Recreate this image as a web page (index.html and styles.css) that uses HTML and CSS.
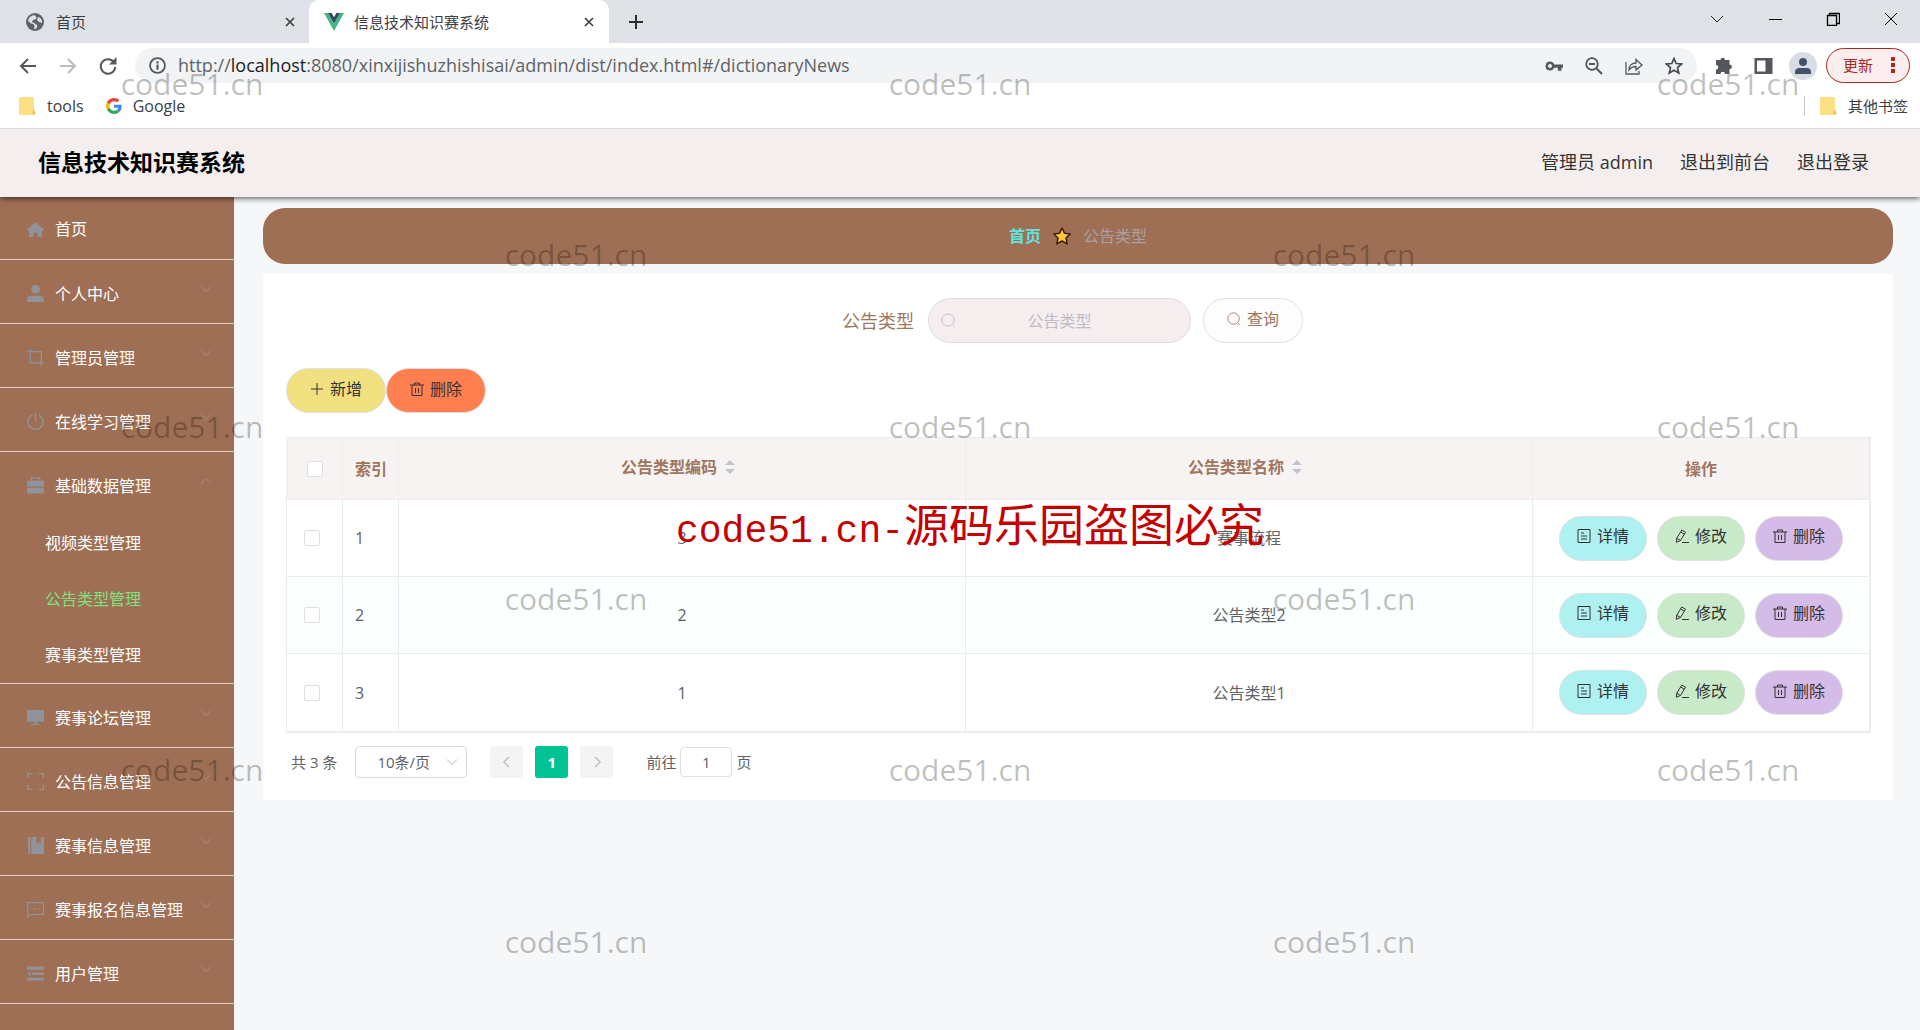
FILE: index.html
```html
<!DOCTYPE html>
<html lang="zh-CN">
<head>
<meta charset="utf-8">
<title>信息技术知识赛系统</title>
<link rel="stylesheet" href="styles.css">
</head>
<body>
<svg class="sprite" aria-hidden="true">
  <symbol id="i-close" viewBox="0 0 12 12"><path d="M2 2l8 8M10 2l-8 8" fill="none" stroke="currentColor" stroke-width="1.7"/></symbol>
  <symbol id="i-folder" viewBox="0 0 17 18"><path d="M1 0h12a2 2 0 0 1 2 2v10l2 4-2 2H1a1 1 0 0 1-1-1V1a1 1 0 0 1 1-1z" fill="#fbdf83"/><path d="M13 16.500c0-2 1-3 2-4l1.500 4-1.500 1.500z" fill="#f0ca58"/></symbol>
  <symbol id="i-down" viewBox="0 0 12 12"><path d="M1 3.500l5 5 5-5" fill="none" stroke="currentColor" stroke-width="1"/></symbol>
  <symbol id="i-search" viewBox="0 0 16 16"><circle cx="7.500" cy="7.500" r="6.500" fill="none" stroke="currentColor"/><path d="M12.300 12.300l2.500 2.700" stroke="currentColor"/></symbol>
  <symbol id="i-plus" viewBox="0 0 14 14"><path d="M7 1v12M1 7h12" stroke="currentColor"/></symbol>
  <symbol id="i-trash" viewBox="0 0 14 14"><path d="M0 3h14M4.500 3V1h5v2M2 3v10.500h10V3M5.500 6v5M8.500 6v5" fill="none" stroke="currentColor"/></symbol>
  <symbol id="i-doc" viewBox="0 0 14 14"><path d="M1 .5h12v13H1zM4 4h3M4 7h6M4 10h6" fill="none" stroke="currentColor"/></symbol>
  <symbol id="i-edit" viewBox="0 0 14 14"><path d="M6.800 1L10.500 3.200 5.500 11.500 1.300 13.300 1.700 9.300zM5.700 3l3.600 2.200M1.700 9.300l3.800 2.200M7 13.500h7" fill="none" stroke="currentColor"/></symbol>
  <symbol id="i-home" viewBox="0 0 16 16"><path d="M8 1l8 7v1h-2v6h-4v-4H6v4H2V9H0V8z" fill="currentColor"/></symbol>
  <symbol id="i-user" viewBox="0 0 16 16"><circle cx="8" cy="4" r="4" fill="currentColor"/><path d="M0 16v-2c0-3 2-4 4-4h8c2 0 4 1 4 4v2z" fill="currentColor"/></symbol>
  <symbol id="i-crop" viewBox="0 0 16 16"><path d="M3 0v13h13M0 2.500h13.500V16" fill="none" stroke="currentColor" stroke-width="1.200"/></symbol>
  <symbol id="i-power" viewBox="0 0 16 16"><path d="M8 0v8M5 1.700a7.200 7.200 0 1 0 6 0" fill="none" stroke="currentColor" stroke-width="1.200"/></symbol>
  <symbol id="i-case" viewBox="0 0 16 16"><path d="M4 4V.8h8V4" fill="none" stroke="currentColor" stroke-width="1.300"/><path d="M0 3.500h16V9H0zM0 10h16v5.500H0z" fill="currentColor"/></symbol>
  <symbol id="i-screen" viewBox="0 0 16 16"><path d="M0 1h16v11H0zM7 12h2v2h3v1H4v-1h3z" fill="currentColor"/></symbol>
  <symbol id="i-full" viewBox="0 0 16 16"><path d="M.6 5V.6H5M11 .6h4.400V5M15.400 11v4.400H11M5 15.400H.6V11" fill="none" stroke="currentColor" stroke-width="1.200"/></symbol>
  <symbol id="i-book" viewBox="0 0 16 16"><path d="M1 0h2v16H1zM4 0h5v7l2-2 2 2V0h3v16H4z" fill="currentColor"/></symbol>
  <symbol id="i-chat" viewBox="0 0 16 16"><path d="M.6 1.500h15v11H4L.6 15.300z" fill="none" stroke="currentColor" stroke-width="1.200"/><path d="M3.500 6.500H5V8H3.500zM7.200 6.500h1.500V8H7.200zM11 6.500h1.500V8H11z" fill="currentColor"/></symbol>
  <symbol id="i-list" viewBox="0 0 16 16"><path d="M0 1.500h16v3H0zM5 7h11v2.500H5zM0 12h16v2.500H0zM0 8.200L3.500 6v4.500z" fill="currentColor"/></symbol>
  <symbol id="i-star" viewBox="0 0 18 18"><path d="M9 1l2.500 5.300 5.700.7-4.200 4 1.100 5.900L9 14l-5.100 2.900L5 11 .8 7l5.700-.7z" fill="currentColor" stroke="#3a1c08" stroke-width="1.500" stroke-linejoin="round"/></symbol>
</svg>

<div class="browser">
  <div class="tabs">
    <div class="tab">
      <svg class="fav" viewBox="0 0 18 18"><circle cx="9" cy="9" r="9" fill="#5f6368"/><path d="M8 2c-3 .5-5.500 3-6 6l3 2.500 2.500.5 1 2-.5 3c3 0 3.500-2 3-4l-3-2-2-1 1-2 3-1 .5-2zM12 4l-1 3 2 2 3 1c.3-3-1-5.500-4-6z" fill="#dee1e6"/></svg>
      <span class="tab-title">首页</span>
      <button class="tab-close" aria-label="关闭"><svg><use href="#i-close"/></svg></button>
    </div>
    <div class="tab tab-active">
      <svg class="fav fav-vue" viewBox="0 0 20 18"><path d="M0 0h4l6 10.500L16 0h4L10 18z" fill="#41b883"/><path d="M4 0h3.600L10 4.200 12.400 0H16l-6 10.500z" fill="#35495e"/></svg>
      <span class="tab-title">信息技术知识赛系统</span>
      <button class="tab-close" aria-label="关闭"><svg><use href="#i-close"/></svg></button>
    </div>
    <button class="newtab" aria-label="新标签页"><svg viewBox="0 0 16 16"><path d="M8 1v14M1 8h14" stroke="#2b2d30" stroke-width="2"/></svg></button>
    <div class="winbtns">
      <button aria-label="搜索标签页"><svg viewBox="0 0 14 14"><path d="M1 4l6 6 6-6" fill="none" stroke="#222"/></svg></button>
      <button aria-label="最小化"><svg viewBox="0 0 14 14"><path d="M1 7.500h13" stroke="#000"/></svg></button>
      <button aria-label="还原"><svg viewBox="0 0 14 14"><path d="M1.500 3.500h9v10h-9zM3.500 3.500v-2h10v10h-3" fill="none" stroke="#000" stroke-width="1.300"/></svg></button>
      <button aria-label="关闭窗口"><svg viewBox="0 0 14 14"><path d="M1 1l12 12M13 1L1 13" stroke="#000"/></svg></button>
    </div>
  </div>
  <div class="toolbar">
    <div class="nav">
      <button aria-label="后退"><svg viewBox="0 0 18 18"><path d="M17 9H2M9 2L2 9l7 7" fill="none" stroke="#54575b" stroke-width="2"/></svg></button>
      <button aria-label="前进"><svg viewBox="0 0 18 18"><path d="M1 9h15M9 2l7 7-7 7" fill="none" stroke="#babcbe" stroke-width="2"/></svg></button>
      <button aria-label="重新加载"><svg viewBox="0 0 18 18"><path d="M15 5.500A7.200 7.200 0 1 0 16.200 10" fill="none" stroke="#54575b" stroke-width="2"/><path d="M17.500 0v7.500H10z" fill="#54575b"/></svg></button>
    </div>
    <div class="omnibox">
      <svg class="info" viewBox="0 0 16 16"><circle cx="8" cy="8" r="7" fill="none" stroke="#54575b" stroke-width="1.700"/><path d="M7 7h2v5H7zM7 4h2v2H7z" fill="#54575b"/></svg>
      <span class="url">http://<b>localhost</b>:8080/xinxijishuzhishisai/admin/dist/index.html#/dictionaryNews</span>
      <div class="omni-icons">
        <svg viewBox="0 0 18 18"><path d="M5 4.500a4.500 4.500 0 0 1 4.200 3H18v3.300h-1.500v3h-3.600v-3H9.200A4.500 4.500 0 1 1 5 4.500zM5 7a2 2 0 1 0 0 4 2 2 0 0 0 0-4z" fill="#54575b" fill-rule="evenodd"/></svg>
        <svg viewBox="0 0 18 18"><circle cx="7" cy="7" r="5.800" fill="none" stroke="#54575b" stroke-width="1.800"/><path d="M4 7h6M11.500 11.500L17 17" stroke="#54575b" stroke-width="2"/></svg>
        <svg viewBox="0 0 18 18"><path d="M1 5v12h13v-3M4 13c0-5 3-7 7-7V2.500l6 5.500-6 5V9.500c-3 0-5 1-7 3.500z" fill="none" stroke="#54575b" stroke-width="1.300"/></svg>
        <svg viewBox="0 0 18 18"><path d="M9 1.500l2.200 5 5.500.5-4.200 3.600 1.300 5.400L9 13.200 4.200 16l1.300-5.400L1.300 7l5.500-.5z" fill="none" stroke="#45484c" stroke-width="1.700"/></svg>
      </div>
    </div>
    <div class="ext">
      <svg viewBox="0 0 18 18"><path d="M6 3a2.200 2.200 0 0 1 4.500 0H15v4.500a2.300 2.300 0 0 1 0 4.700V17h-4.500a2.200 2.200 0 0 0-4.500 0H1.500v-4.500a2.200 2.200 0 0 0 0-4.500V3z" fill="#54575b"/></svg>
      <svg viewBox="0 0 18 18"><path d="M0 1h18v16H0zM2.500 3.500v11H11v-11z" fill="#54575b" fill-rule="evenodd"/></svg>
      <span class="avatar"><svg><use href="#i-user"/></svg></span>
      <button class="update">更新<svg viewBox="0 0 4 18"><path d="M0 1h4v4H0zM0 7h4v4H0zM0 13h4v4H0z" fill="#b3261e"/></svg></button>
    </div>
  </div>
  <div class="bookmarks">
    <a href="#"><svg class="folder"><use href="#i-folder"/></svg>tools</a>
    <a href="#"><svg class="google" viewBox="0 0 48 48"><path fill="#EA4335" d="M24 9.500c3.540 0 6.710 1.220 9.210 3.600l6.850-6.850C35.900 2.380 30.470 0 24 0 14.620 0 6.510 5.380 2.560 13.220l7.980 6.190C12.430 13.720 17.740 9.500 24 9.500z"/><path fill="#4285F4" d="M46.980 24.550c0-1.570-.15-3.090-.38-4.550H24v9.020h12.940c-.58 2.960-2.260 5.480-4.780 7.180l7.730 6c4.510-4.180 7.090-10.360 7.090-17.650z"/><path fill="#FBBC05" d="M10.530 28.590a14.500 14.500 0 0 1 0-9.180l-7.980-6.190a24 24 0 0 0 0 21.560z"/><path fill="#34A853" d="M24 48c6.480 0 11.930-2.130 15.890-5.810l-7.730-6c-2.150 1.450-4.920 2.300-8.160 2.300-6.260 0-11.570-4.220-13.470-9.910l-7.980 6.190C6.510 42.620 14.620 48 24 48z"/></svg>Google</a>
    <a class="other" href="#"><svg class="folder"><use href="#i-folder"/></svg>其他书签</a>
  </div>
</div>

<header class="topbar">
  <h1>信息技术知识赛系统</h1>
  <div class="account">
    <span>管理员 admin</span>
    <a href="#">退出到前台</a>
    <a href="#">退出登录</a>
  </div>
</header>

<div class="layout">
  <nav class="sidebar">
    <a class="item item-home" href="#"><svg><use href="#i-home"/></svg><span>首页</span></a>
    <a class="item" href="#"><svg><use href="#i-user"/></svg><span>个人中心</span><svg class="arrow"><use href="#i-down"/></svg></a>
    <a class="item" href="#"><svg><use href="#i-crop"/></svg><span>管理员管理</span><svg class="arrow"><use href="#i-down"/></svg></a>
    <a class="item" href="#"><svg><use href="#i-power"/></svg><span>在线学习管理</span><svg class="arrow"><use href="#i-down"/></svg></a>
    <div class="group">
      <a class="item" href="#"><svg><use href="#i-case"/></svg><span>基础数据管理</span><svg class="arrow arrow-up"><use href="#i-down"/></svg></a>
      <a class="sub" href="#">视频类型管理</a>
      <a class="sub sub-active" href="#">公告类型管理</a>
      <a class="sub" href="#">赛事类型管理</a>
    </div>
    <a class="item" href="#"><svg><use href="#i-screen"/></svg><span>赛事论坛管理</span><svg class="arrow"><use href="#i-down"/></svg></a>
    <a class="item" href="#"><svg><use href="#i-full"/></svg><span>公告信息管理</span><svg class="arrow"><use href="#i-down"/></svg></a>
    <a class="item" href="#"><svg><use href="#i-book"/></svg><span>赛事信息管理</span><svg class="arrow"><use href="#i-down"/></svg></a>
    <a class="item" href="#"><svg><use href="#i-chat"/></svg><span>赛事报名信息管理</span><svg class="arrow"><use href="#i-down"/></svg></a>
    <a class="item" href="#"><svg><use href="#i-list"/></svg><span>用户管理</span><svg class="arrow"><use href="#i-down"/></svg></a>
    <a class="item" href="#" aria-label="更多"><svg><use href="#i-home"/></svg></a>
  </nav>

  <main class="main">
    <div class="crumbs">
      <a href="#">首页</a>
      <svg><use href="#i-star"/></svg>
      <span>公告类型</span>
    </div>
    <section class="card">
      <form class="search">
        <label for="q">公告类型</label>
        <div class="field"><svg><use href="#i-search"/></svg><input id="q" type="text" placeholder="公告类型"></div>
        <button class="btn btn-query" type="button"><svg><use href="#i-search"/></svg>查询</button>
      </form>
      <div class="actions">
        <button class="btn btn-add"><svg><use href="#i-plus"/></svg>新增</button>
        <button class="btn btn-remove"><svg><use href="#i-trash"/></svg>删除</button>
      </div>
      <table class="grid">
        <colgroup><col class="c-check"><col class="c-index"><col><col><col class="c-ops"></colgroup>
        <thead>
          <tr>
            <th class="check"><input type="checkbox" aria-label="全选"></th>
            <th class="left">索引</th>
            <th><span class="sortable">公告类型编码<svg viewBox="0 0 10 16"><path d="M0 6l5-5 5 5zM0 10l5 5 5-5z" fill="#c0c4cc"/></svg></span></th>
            <th><span class="sortable">公告类型名称<svg viewBox="0 0 10 16"><path d="M0 6l5-5 5 5zM0 10l5 5 5-5z" fill="#c0c4cc"/></svg></span></th>
            <th>操作</th>
          </tr>
        </thead>
        <tbody>
          <tr>
            <td class="check"><input type="checkbox" aria-label="选择第1行"></td><td class="left">1</td><td>3</td><td>赛事流程</td>
            <td><div class="ops"><button class="btn btn-view"><svg><use href="#i-doc"/></svg>详情</button><button class="btn btn-edit"><svg><use href="#i-edit"/></svg>修改</button><button class="btn btn-del"><svg><use href="#i-trash"/></svg>删除</button></div></td>
          </tr>
          <tr>
            <td class="check"><input type="checkbox" aria-label="选择第2行"></td><td class="left">2</td><td>2</td><td>公告类型2</td>
            <td><div class="ops"><button class="btn btn-view"><svg><use href="#i-doc"/></svg>详情</button><button class="btn btn-edit"><svg><use href="#i-edit"/></svg>修改</button><button class="btn btn-del"><svg><use href="#i-trash"/></svg>删除</button></div></td>
          </tr>
          <tr>
            <td class="check"><input type="checkbox" aria-label="选择第3行"></td><td class="left">3</td><td>1</td><td>公告类型1</td>
            <td><div class="ops"><button class="btn btn-view"><svg><use href="#i-doc"/></svg>详情</button><button class="btn btn-edit"><svg><use href="#i-edit"/></svg>修改</button><button class="btn btn-del"><svg><use href="#i-trash"/></svg>删除</button></div></td>
          </tr>
        </tbody>
      </table>
      <div class="pager">
        <span>共 3 条</span>
        <div class="size"><select aria-label="每页条数"><option>10条/页</option></select><svg><use href="#i-down"/></svg></div>
        <div class="pages">
          <button aria-label="上一页" disabled><svg viewBox="0 0 12 12"><path d="M8 1L3 6l5 5" fill="none" stroke="currentColor" stroke-width="1.700"/></svg></button>
          <button class="current">1</button>
          <button aria-label="下一页" disabled><svg viewBox="0 0 12 12"><path d="M4 1l5 5-5 5" fill="none" stroke="currentColor" stroke-width="1.700"/></svg></button>
        </div>
        <label class="jump">前往<input type="text" value="1">页</label>
      </div>
    </section>
  </main>
</div>

<div class="marks">
  <span>code51.cn</span><i></i><span>code51.cn</span><i></i><span>code51.cn</span>
  <i></i><span>code51.cn</span><i></i><span>code51.cn</span><i></i>
  <span>code51.cn</span><i></i><span>code51.cn</span><i></i><span>code51.cn</span>
  <i></i><span>code51.cn</span><i></i><span>code51.cn</span><i></i>
  <span>code51.cn</span><i></i><span>code51.cn</span><i></i><span>code51.cn</span>
  <i></i><span>code51.cn</span><i></i><span>code51.cn</span><i></i>
</div>
<div class="notice"><span class="notice-latin">code51.cn-</span>源码乐园盗图必究</div>
</body>
</html>
```
FILE: styles.css
```css
* { box-sizing: border-box; }

body {
  margin: 0;
  height: 100vh;
  overflow: hidden;
  position: relative;
  display: flex;
  flex-direction: column;
  background: #f5f7f9;
  color: #606266;
  font: 16px/24px "Open Sans", "Noto Sans CJK SC", sans-serif;
}

a { color: inherit; text-decoration: none; }
button { margin: 0; padding: 0; border: 0; background: none; font: inherit; color: inherit; }
svg { display: block; flex: none; }
.sprite { position: absolute; width: 0; height: 0; }

/* browser window */
.browser { flex: none; position: relative; z-index: 2; background: #fff; border-bottom: 1px solid #dcdcdc; color: #3c4043; }
.tabs { display: flex; align-items: stretch; height: 43px; background: #dee1e6; }
.tab { display: flex; align-items: center; width: 309px; padding: 0 13px 0 26px; font-size: 15px; }
.tab-active { width: 300px; padding: 0 14px 0 15px; background: #fff; border-radius: 10px 10px 0 0; }
.fav { width: 18px; height: 18px; margin-right: 12px; }
.fav-vue { width: 20px; margin-right: 10px; }
.tab-title { flex: 1; }
.tab-close svg { width: 12px; height: 12px; }
.newtab { margin-left: 19px; }
.newtab svg { width: 16px; height: 16px; }
.winbtns { display: flex; margin-left: auto; padding: 0 0 6px; }
.winbtns button { display: flex; align-items: center; justify-content: center; width: 58px; }
.winbtns svg { width: 14px; height: 14px; }

.toolbar { display: flex; align-items: center; height: 45px; padding: 0 10px 0 19px; }
.nav { display: flex; gap: 22px; width: 116px; }
.nav svg { width: 18px; height: 18px; }
.omnibox { flex: 1; display: flex; align-items: center; height: 35px; padding: 0 14px 0 14px; border-radius: 18px; background: #f1f3f4; }
.info { width: 17px; height: 17px; margin-right: 12px; }
.url { flex: 1; padding-bottom: 2px; font-size: 18px; color: #5f6368; white-space: nowrap; }
.url b { font-weight: 400; color: #202124; }
.omni-icons { display: flex; gap: 22px; }
.omni-icons svg { width: 18px; height: 18px; }
.ext { display: flex; align-items: center; gap: 21px; margin-left: 17px; }
.ext > svg { width: 19px; height: 18px; }
.avatar { display: flex; align-items: center; justify-content: center; width: 28px; height: 28px; margin: 0 -12px 0 -5px; border-radius: 50%; background: #d8dce5; color: #44516b; }
.avatar svg { width: 16px; height: 16px; }
.update { display: flex; align-items: center; justify-content: space-between; width: 84px; height: 35px; padding: 0 14px 2px 16px; border: 1px solid #b3261e; border-radius: 18px; background: #fceeee; color: #a52a24; font-size: 15px; }
.update svg { width: 4px; height: 18px; }

.bookmarks { display: flex; align-items: center; gap: 22px; height: 40px; padding: 0 12px 4px 19px; }
.bookmarks a { display: flex; align-items: center; }
.folder { width: 17px; height: 18px; margin-right: 11px; }
.google { width: 16px; height: 16px; margin-right: 11px; }
.bookmarks .other { margin-left: auto; padding-left: 15px; border-left: 1px solid #c8c8c8; line-height: 20px; font-size: 15px; }

/* page header */
.topbar { flex: none; position: relative; z-index: 1; display: flex; align-items: center; justify-content: space-between; height: 68px; padding: 0 51px 2px 38px; background: #f4efee; box-shadow: 0 1px 6px rgba(0, 0, 0, .7); color: #333; }
.topbar h1 { margin: 0; font-size: 23px; line-height: 32px; color: #000; }
.account { display: flex; gap: 27px; font-size: 18px; }

/* side menu */
.layout { flex: 1; display: flex; min-height: 0; }
.sidebar { flex: none; width: 234px; overflow: hidden; background: #9f6f55; color: #fff; }
.item { display: flex; align-items: center; height: 64px; padding: 0 22px 0 27px; border-bottom: 1px solid #e6d2c6; }
.item svg { width: 17px; height: 17px; margin: 3px 11px 0 0; color: #909399; }
.item span { flex: 1; padding-top: 5px; white-space: nowrap; }
.item .arrow { width: 12px; height: 12px; margin: 0 0 6px; color: #ad8e7e; }
.item .arrow-up { transform: rotate(180deg); }
.item-home { height: 63px; }
.item-home span { padding-top: 2px; }
.group { border-bottom: 1px solid #e6d2c6; }
.group .item { height: 63px; border-bottom: 0; }
.sub { display: block; height: 56px; padding-left: 45px; line-height: 56px; }
.sub-active { color: #7ee27e; }

/* content */
.main { flex: 1; padding: 11px 27px 0 29px; }
.crumbs { display: flex; align-items: center; justify-content: center; gap: 12px; height: 56px; margin-bottom: 10px; border-radius: 22px; background: #9f6f55; color: #a9a0a3; }
.crumbs a { color: #5fe6dc; font-weight: 700; }
.crumbs svg { width: 18px; height: 18px; color: #ffc83d; }
.card { padding: 24px 22px 22px 23px; background: #fff; }

.search { display: flex; justify-content: center; align-items: center; padding-right: 12px; color: #a07660; }
.search label { margin-right: 14px; font-size: 18px; }
.field { display: flex; align-items: center; width: 263px; height: 45px; margin-right: 12px; padding: 0 12px; border: 1px solid #e0dbe0; border-radius: 23px; background: #f6edef; color: #c0bcc6; }
.field svg { width: 15px; height: 15px; }
.field input { flex: 1; min-width: 0; padding: 0 15px 0 0; border: 0; outline: 0; background: none; font: inherit; text-align: center; }
.field input::placeholder { color: #bdbbc6; opacity: 1; }

.btn { display: flex; align-items: center; justify-content: center; gap: 6px; width: 100px; height: 45px; padding-bottom: 4px; border: 1px solid #dfe0e2; border-radius: 23px; color: #333; white-space: nowrap; }
.btn svg { width: 14px; height: 14px; }
.btn-query { background: #fdfdfd; color: #a07660; }
.actions { display: flex; margin: 25px 0 24px; }
.btn-add { background: #f0e080; }
.btn-remove { background: #ff7f50; }

.grid { width: 100%; table-layout: fixed; border-collapse: separate; border-spacing: 0; border: 1px solid #ebeeef; border-right-width: 2px; border-bottom-width: 2px; text-align: center; }
.c-check, .c-index { width: 56px; }
.c-ops { width: 336px; }
.grid th, .grid td { padding: 0; border-right: 1px solid #e8eeee; border-bottom: 1px solid #e8eeee; }
.grid th:last-child, .grid td:last-child { border-right: 0; }
.grid tr:last-child td { border-bottom: 0; }
.grid th { height: 62px; background: #f7f3f2; color: #a07660; border-color: #f0eceb; }
.grid tbody td { height: 77px; }
.grid tbody tr:nth-child(even) { background: #fbfffd; }
.grid .left { padding-left: 12px; text-align: left; }
.grid input { appearance: none; display: block; width: 16px; height: 16px; margin: 0 auto; border: 1px solid #dcdfe6; border-radius: 2px; background: #fff; }
.grid td.check { padding-right: 5px; }
.sortable { display: flex; align-items: center; justify-content: center; gap: 8px; padding: 0 8px 3px 0; }
.sortable svg { width: 10px; height: 16px; }
.ops { display: flex; justify-content: center; gap: 10px; }
.ops .btn { width: 88px; }
.btn-view { background: #aff0f1; }
.btn-edit { background: #c9eac9; }
.btn-del { background: #d5bbe7; }

.pager { display: flex; align-items: center; height: 45px; padding: 13px 0 0 5px; font-size: 15px; }
.size { display: flex; align-items: center; width: 112px; height: 32px; margin: 0 23px 0 18px; padding-right: 8px; border: 1px solid #d6d9df; border-radius: 4px; color: #b4b8c0; }
.size select { flex: 1; appearance: none; padding: 0 0 0 21px; border: 0; outline: 0; background: none; color: #606266; font: inherit; }
.size svg { width: 12px; height: 12px; }
.pages { display: flex; gap: 12px; margin-right: 33px; }
.pages button { display: flex; align-items: center; justify-content: center; width: 33px; height: 32px; border-radius: 3px; background: #f4f4f5; color: #c0c4cc; }
.pages svg { width: 12px; height: 12px; }
.pages .current { background: #00c292; color: #fff; font-weight: 700; }
.jump { display: flex; align-items: center; gap: 4px; }
.jump input { width: 52px; height: 30px; padding: 0; border: 1px solid #dcdfe6; border-radius: 4px; color: #606266; font: inherit; text-align: center; }

/* watermarks laid over the whole page */
.marks { position: absolute; inset: -2px 0 2px; z-index: 3; display: grid; grid-template: repeat(6, 1fr) / repeat(5, 1fr); place-items: center; color: rgba(0, 0, 0, .26); font: 30px/36px "Open Sans", sans-serif; pointer-events: none; }
.notice { position: absolute; top: 51%; left: 0; right: 0; z-index: 4; display: flex; align-items: baseline; justify-content: center; margin-top: -30px; padding-left: 20px; color: #c40000; font: 45px/56px "Noto Sans CJK SC", sans-serif; pointer-events: none; }
.notice-latin { font: 38px/56px "Liberation Mono", monospace; }
```
